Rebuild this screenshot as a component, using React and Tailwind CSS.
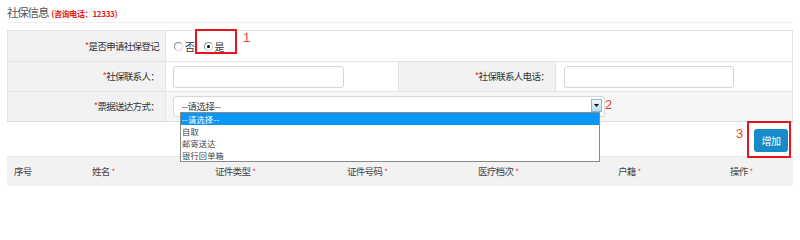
import React from 'react';

const font = { fontFamily: '"Noto Sans CJK SC", "Liberation Sans", sans-serif' };
const num = { fontFamily: '"Liberation Sans", sans-serif' };

const Star = () => <span className="text-[#ff2a2a]">*</span>;

const Radio = ({ checked, label }) => (
  <label className="flex items-center gap-[2px] text-[10px] tracking-[-0.5px] text-[#333]">
    <span className="w-[9px] h-[9px] rounded-full border border-[#8a8a8a] border-r-[#d5d5d5] border-b-[#d5d5d5] bg-white flex items-center justify-center">
      {checked && <span className="w-[3px] h-[3px] rounded-full bg-black" />}
    </span>
    {label}
  </label>
);

const Label = ({ children, w = 'w-[158px]' }) => (
  <div className={`${w} shrink-0 h-full bg-[#f2f2f2] border-r border-[#e4e4e4] flex items-center justify-end pr-[6px] text-[9.5px] tracking-[-0.7px] text-[#333]`}>
    <Star />
    {children}
  </div>
);

const TextInput = ({ w }) => (
  <div className={`${w} h-[22px] rounded-[3px] border border-[#d4d4d4] bg-white`} />
);

const columns = [
  { name: '序号', w: 'w-[78px]', req: false },
  { name: '姓名', w: 'w-[123px]', req: true },
  { name: '证件类型', w: 'w-[132px]', req: true },
  { name: '证件号码', w: 'w-[131px]', req: true },
  { name: '医疗档次', w: 'w-[140px]', req: true },
  { name: '户籍', w: 'w-[112px]', req: true },
  { name: '操作', w: 'flex-1', req: true },
];

const options = ['--请选择--', '自取', '邮寄送达', '银行回单箱'];

export default function App() {
  return (
    <div className="relative w-[800px] h-[206px] bg-white overflow-hidden" style={font}>
      <div className="mx-[7px] h-[23px] flex items-end pb-[1px] border-b border-[#eeeeee]">
        <span className="text-[11.5px] tracking-[-1.2px] text-[#555]">社保信息</span>
        <span className="ml-[3px] text-[8px] tracking-[-0.3px] text-[#e21b1b] font-bold mb-[1px]">(咨询电话：12333)</span>
      </div>

      <div className="mx-[7px] mt-[7px] border border-[#e4e4e4] border-b-[#dcdcdc]">
        <div className="h-[30px] flex">
          <Label>是否申请社保登记</Label>
          <div className="flex-1 bg-white flex items-center pl-[8px] gap-[9px]">
            <Radio label="否" />
            <Radio checked label="是" />
          </div>
        </div>

        <div className="h-[30px] flex border-t border-[#e4e4e4]">
          <Label>社保联系人：</Label>
          <div className="w-[233px] shrink-0 h-full bg-white border-r border-[#e4e4e4] flex items-center pl-[7px]">
            <TextInput w="w-[171px]" />
          </div>
          <Label w="w-[157px]">社保联系人电话：</Label>
          <div className="flex-1 bg-white flex items-center pl-[8px]">
            <TextInput w="w-[170px]" />
          </div>
        </div>

        <div className="h-[30px] flex border-t border-[#e4e4e4]">
          <Label>票据送达方式：</Label>
          <div className="flex-1 bg-[#f6f6f6] flex items-center pl-[7px]">
            <div className="relative w-[432px] h-[21px] rounded-[3px] border border-[#d8d8d8] bg-white flex items-center pl-[8px] text-[9.5px] tracking-[-0.5px] text-[#444]">
              --请选择--
              <span className="absolute right-[2px] top-[2px] w-[11px] h-[13px] border border-[#8fb3cf] bg-gradient-to-b from-[#eef6fc] to-[#b9d8f0] flex items-center justify-center">
                <svg width="5" height="3" viewBox="0 0 5 3"><path d="M0 0h5L2.5 3z" fill="#111" /></svg>
              </span>
              <div className="absolute left-[6px] top-[15px] w-[420px] bg-white border border-[#8a8a8a] z-10 text-[8.2px] tracking-[0.2px] leading-[12px] text-[#444]">
                {options.map((o, i) => (
                  <div key={o} className={`h-[12px] pl-[1px] ${i === 0 ? 'bg-[#0a96f5] text-white' : ''}`}>{o}</div>
                ))}
              </div>
            </div>
          </div>
        </div>
      </div>

      <div className="mx-[7px] h-[34px] flex justify-end items-start pt-[7px] pr-[5px]">
        <button className="w-[34px] h-[23px] rounded-[3px] bg-[#168bc8] text-white text-[10px] tracking-[-0.5px]">增加</button>
      </div>

      <div className="mx-[7px] h-[30px] bg-[#f2f2f2] border-t border-[#e8e8e8] flex items-center pl-[7px] text-[9.5px] tracking-[-0.7px] text-[#444]">
        {columns.map((c) => (
          <div key={c.name} className={`${c.w} shrink-0`}>
            {c.name}
            {c.req && <span className="text-[#ff2a2a] ml-[2px] text-[8px]">*</span>}
          </div>
        ))}
      </div>

      <div className="absolute left-[195px] top-[29px] w-[42px] h-[25px] border-2 border-[#e8141b]" />
      <span className="absolute left-[243px] top-[28px] text-[13px] text-[#f03c3c]" style={num}>1</span>
      <span className="absolute left-[605px] top-[95px] text-[13px] text-[#f03c3c]" style={num}>2</span>
      <span className="absolute left-[736px] top-[124px] text-[13px] text-[#f03c3c]" style={num}>3</span>
      <div className="absolute left-[747px] top-[121px] w-[44px] h-[37px] border-2 border-[#e8141b]" />
    </div>
  );
}
